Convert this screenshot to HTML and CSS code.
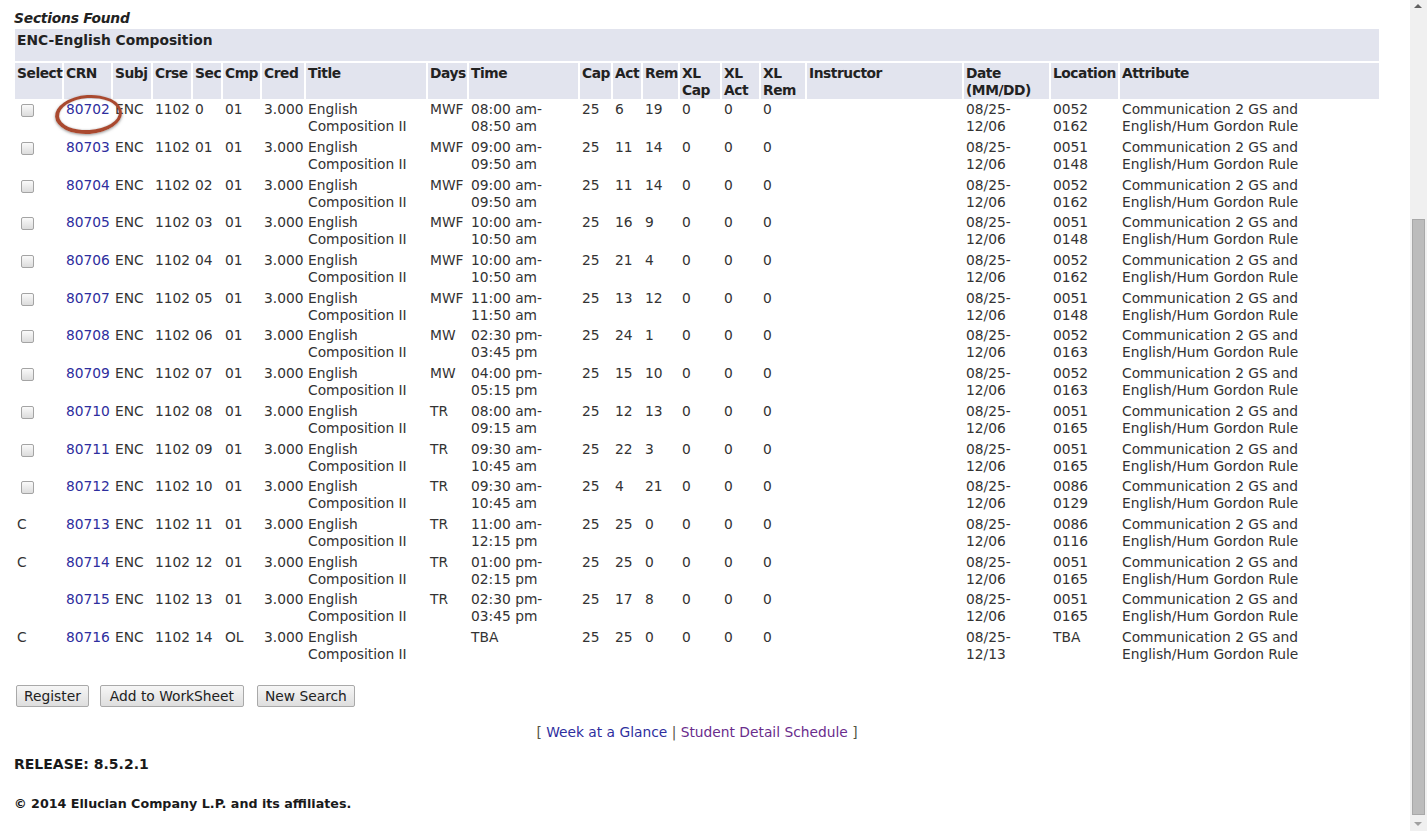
FILE: index.html
```html
<!DOCTYPE html>
<html lang="en">
<head>
  <meta charset="UTF-8">
  <title>Look-Up Classes to Add</title>
  <link rel="stylesheet" href="styles.css">
</head>
<body>
  <div class="pagebody">
    <form>
      <table class="datadisplaytable" summary="This layout table is used to present the sections found">
        <caption class="captiontext">Sections Found</caption>
        <colgroup>
          <col class="w-select"><col class="w-crn"><col class="w-subj"><col class="w-crse"><col class="w-sec">
          <col class="w-cmp"><col class="w-cred"><col class="w-title"><col class="w-days"><col class="w-time">
          <col class="w-cap"><col class="w-act"><col class="w-rem"><col class="w-xlcap"><col class="w-xlact">
          <col class="w-xlrem"><col class="w-instr"><col class="w-date"><col class="w-loc"><col class="w-attr">
        </colgroup>
        <tr>
          <th class="ddtitle" colspan="20">ENC-English Composition</th>
        </tr>
        <tr>
          <th class="ddheader">Select</th>
          <th class="ddheader">CRN</th>
          <th class="ddheader">Subj</th>
          <th class="ddheader">Crse</th>
          <th class="ddheader">Sec</th>
          <th class="ddheader">Cmp</th>
          <th class="ddheader">Cred</th>
          <th class="ddheader">Title</th>
          <th class="ddheader">Days</th>
          <th class="ddheader">Time</th>
          <th class="ddheader">Cap</th>
          <th class="ddheader">Act</th>
          <th class="ddheader">Rem</th>
          <th class="ddheader">XL Cap</th>
          <th class="ddheader">XL Act</th>
          <th class="ddheader">XL Rem</th>
          <th class="ddheader">Instructor</th>
          <th class="ddheader">Date (MM/DD)</th>
          <th class="ddheader">Location</th>
          <th class="ddheader">Attribute</th>
        </tr>
        <tr>
          <td class="dddefault"><input type="checkbox" name="sel_crn"></td>
          <td class="dddefault"><span class="marked"><a href="#">80702</a></span></td>
          <td class="dddefault">ENC</td><td class="dddefault">1102</td><td class="dddefault">0</td><td class="dddefault">01</td>
          <td class="dddefault">3.000</td><td class="dddefault">English Composition II</td>
          <td class="dddefault">MWF</td><td class="dddefault">08:00 am-08:50 am</td>
          <td class="dddefault">25</td><td class="dddefault">6</td><td class="dddefault">19</td>
          <td class="dddefault">0</td><td class="dddefault">0</td><td class="dddefault">0</td><td class="dddefault"></td>
          <td class="dddefault">08/25-12/06</td><td class="dddefault">0052 0162</td>
          <td class="dddefault">Communication 2 GS and English/Hum Gordon Rule</td>
        </tr>
        <tr>
          <td class="dddefault"><input type="checkbox" name="sel_crn"></td>
          <td class="dddefault"><a href="#">80703</a></td>
          <td class="dddefault">ENC</td><td class="dddefault">1102</td><td class="dddefault">01</td><td class="dddefault">01</td>
          <td class="dddefault">3.000</td><td class="dddefault">English Composition II</td>
          <td class="dddefault">MWF</td><td class="dddefault">09:00 am-09:50 am</td>
          <td class="dddefault">25</td><td class="dddefault">11</td><td class="dddefault">14</td>
          <td class="dddefault">0</td><td class="dddefault">0</td><td class="dddefault">0</td><td class="dddefault"></td>
          <td class="dddefault">08/25-12/06</td><td class="dddefault">0051 0148</td>
          <td class="dddefault">Communication 2 GS and English/Hum Gordon Rule</td>
        </tr>
        <tr>
          <td class="dddefault"><input type="checkbox" name="sel_crn"></td>
          <td class="dddefault"><a href="#">80704</a></td>
          <td class="dddefault">ENC</td><td class="dddefault">1102</td><td class="dddefault">02</td><td class="dddefault">01</td>
          <td class="dddefault">3.000</td><td class="dddefault">English Composition II</td>
          <td class="dddefault">MWF</td><td class="dddefault">09:00 am-09:50 am</td>
          <td class="dddefault">25</td><td class="dddefault">11</td><td class="dddefault">14</td>
          <td class="dddefault">0</td><td class="dddefault">0</td><td class="dddefault">0</td><td class="dddefault"></td>
          <td class="dddefault">08/25-12/06</td><td class="dddefault">0052 0162</td>
          <td class="dddefault">Communication 2 GS and English/Hum Gordon Rule</td>
        </tr>
        <tr>
          <td class="dddefault"><input type="checkbox" name="sel_crn"></td>
          <td class="dddefault"><a href="#">80705</a></td>
          <td class="dddefault">ENC</td><td class="dddefault">1102</td><td class="dddefault">03</td><td class="dddefault">01</td>
          <td class="dddefault">3.000</td><td class="dddefault">English Composition II</td>
          <td class="dddefault">MWF</td><td class="dddefault">10:00 am-10:50 am</td>
          <td class="dddefault">25</td><td class="dddefault">16</td><td class="dddefault">9</td>
          <td class="dddefault">0</td><td class="dddefault">0</td><td class="dddefault">0</td><td class="dddefault"></td>
          <td class="dddefault">08/25-12/06</td><td class="dddefault">0051 0148</td>
          <td class="dddefault">Communication 2 GS and English/Hum Gordon Rule</td>
        </tr>
        <tr>
          <td class="dddefault"><input type="checkbox" name="sel_crn"></td>
          <td class="dddefault"><a href="#">80706</a></td>
          <td class="dddefault">ENC</td><td class="dddefault">1102</td><td class="dddefault">04</td><td class="dddefault">01</td>
          <td class="dddefault">3.000</td><td class="dddefault">English Composition II</td>
          <td class="dddefault">MWF</td><td class="dddefault">10:00 am-10:50 am</td>
          <td class="dddefault">25</td><td class="dddefault">21</td><td class="dddefault">4</td>
          <td class="dddefault">0</td><td class="dddefault">0</td><td class="dddefault">0</td><td class="dddefault"></td>
          <td class="dddefault">08/25-12/06</td><td class="dddefault">0052 0162</td>
          <td class="dddefault">Communication 2 GS and English/Hum Gordon Rule</td>
        </tr>
        <tr>
          <td class="dddefault"><input type="checkbox" name="sel_crn"></td>
          <td class="dddefault"><a href="#">80707</a></td>
          <td class="dddefault">ENC</td><td class="dddefault">1102</td><td class="dddefault">05</td><td class="dddefault">01</td>
          <td class="dddefault">3.000</td><td class="dddefault">English Composition II</td>
          <td class="dddefault">MWF</td><td class="dddefault">11:00 am-11:50 am</td>
          <td class="dddefault">25</td><td class="dddefault">13</td><td class="dddefault">12</td>
          <td class="dddefault">0</td><td class="dddefault">0</td><td class="dddefault">0</td><td class="dddefault"></td>
          <td class="dddefault">08/25-12/06</td><td class="dddefault">0051 0148</td>
          <td class="dddefault">Communication 2 GS and English/Hum Gordon Rule</td>
        </tr>
        <tr>
          <td class="dddefault"><input type="checkbox" name="sel_crn"></td>
          <td class="dddefault"><a href="#">80708</a></td>
          <td class="dddefault">ENC</td><td class="dddefault">1102</td><td class="dddefault">06</td><td class="dddefault">01</td>
          <td class="dddefault">3.000</td><td class="dddefault">English Composition II</td>
          <td class="dddefault">MW</td><td class="dddefault">02:30 pm-03:45 pm</td>
          <td class="dddefault">25</td><td class="dddefault">24</td><td class="dddefault">1</td>
          <td class="dddefault">0</td><td class="dddefault">0</td><td class="dddefault">0</td><td class="dddefault"></td>
          <td class="dddefault">08/25-12/06</td><td class="dddefault">0052 0163</td>
          <td class="dddefault">Communication 2 GS and English/Hum Gordon Rule</td>
        </tr>
        <tr>
          <td class="dddefault"><input type="checkbox" name="sel_crn"></td>
          <td class="dddefault"><a href="#">80709</a></td>
          <td class="dddefault">ENC</td><td class="dddefault">1102</td><td class="dddefault">07</td><td class="dddefault">01</td>
          <td class="dddefault">3.000</td><td class="dddefault">English Composition II</td>
          <td class="dddefault">MW</td><td class="dddefault">04:00 pm-05:15 pm</td>
          <td class="dddefault">25</td><td class="dddefault">15</td><td class="dddefault">10</td>
          <td class="dddefault">0</td><td class="dddefault">0</td><td class="dddefault">0</td><td class="dddefault"></td>
          <td class="dddefault">08/25-12/06</td><td class="dddefault">0052 0163</td>
          <td class="dddefault">Communication 2 GS and English/Hum Gordon Rule</td>
        </tr>
        <tr>
          <td class="dddefault"><input type="checkbox" name="sel_crn"></td>
          <td class="dddefault"><a href="#">80710</a></td>
          <td class="dddefault">ENC</td><td class="dddefault">1102</td><td class="dddefault">08</td><td class="dddefault">01</td>
          <td class="dddefault">3.000</td><td class="dddefault">English Composition II</td>
          <td class="dddefault">TR</td><td class="dddefault">08:00 am-09:15 am</td>
          <td class="dddefault">25</td><td class="dddefault">12</td><td class="dddefault">13</td>
          <td class="dddefault">0</td><td class="dddefault">0</td><td class="dddefault">0</td><td class="dddefault"></td>
          <td class="dddefault">08/25-12/06</td><td class="dddefault">0051 0165</td>
          <td class="dddefault">Communication 2 GS and English/Hum Gordon Rule</td>
        </tr>
        <tr>
          <td class="dddefault"><input type="checkbox" name="sel_crn"></td>
          <td class="dddefault"><a href="#">80711</a></td>
          <td class="dddefault">ENC</td><td class="dddefault">1102</td><td class="dddefault">09</td><td class="dddefault">01</td>
          <td class="dddefault">3.000</td><td class="dddefault">English Composition II</td>
          <td class="dddefault">TR</td><td class="dddefault">09:30 am-10:45 am</td>
          <td class="dddefault">25</td><td class="dddefault">22</td><td class="dddefault">3</td>
          <td class="dddefault">0</td><td class="dddefault">0</td><td class="dddefault">0</td><td class="dddefault"></td>
          <td class="dddefault">08/25-12/06</td><td class="dddefault">0051 0165</td>
          <td class="dddefault">Communication 2 GS and English/Hum Gordon Rule</td>
        </tr>
        <tr>
          <td class="dddefault"><input type="checkbox" name="sel_crn"></td>
          <td class="dddefault"><a href="#">80712</a></td>
          <td class="dddefault">ENC</td><td class="dddefault">1102</td><td class="dddefault">10</td><td class="dddefault">01</td>
          <td class="dddefault">3.000</td><td class="dddefault">English Composition II</td>
          <td class="dddefault">TR</td><td class="dddefault">09:30 am-10:45 am</td>
          <td class="dddefault">25</td><td class="dddefault">4</td><td class="dddefault">21</td>
          <td class="dddefault">0</td><td class="dddefault">0</td><td class="dddefault">0</td><td class="dddefault"></td>
          <td class="dddefault">08/25-12/06</td><td class="dddefault">0086 0129</td>
          <td class="dddefault">Communication 2 GS and English/Hum Gordon Rule</td>
        </tr>
        <tr>
          <td class="dddefault">C</td>
          <td class="dddefault"><a href="#">80713</a></td>
          <td class="dddefault">ENC</td><td class="dddefault">1102</td><td class="dddefault">11</td><td class="dddefault">01</td>
          <td class="dddefault">3.000</td><td class="dddefault">English Composition II</td>
          <td class="dddefault">TR</td><td class="dddefault">11:00 am-12:15 pm</td>
          <td class="dddefault">25</td><td class="dddefault">25</td><td class="dddefault">0</td>
          <td class="dddefault">0</td><td class="dddefault">0</td><td class="dddefault">0</td><td class="dddefault"></td>
          <td class="dddefault">08/25-12/06</td><td class="dddefault">0086 0116</td>
          <td class="dddefault">Communication 2 GS and English/Hum Gordon Rule</td>
        </tr>
        <tr>
          <td class="dddefault">C</td>
          <td class="dddefault"><a href="#">80714</a></td>
          <td class="dddefault">ENC</td><td class="dddefault">1102</td><td class="dddefault">12</td><td class="dddefault">01</td>
          <td class="dddefault">3.000</td><td class="dddefault">English Composition II</td>
          <td class="dddefault">TR</td><td class="dddefault">01:00 pm-02:15 pm</td>
          <td class="dddefault">25</td><td class="dddefault">25</td><td class="dddefault">0</td>
          <td class="dddefault">0</td><td class="dddefault">0</td><td class="dddefault">0</td><td class="dddefault"></td>
          <td class="dddefault">08/25-12/06</td><td class="dddefault">0051 0165</td>
          <td class="dddefault">Communication 2 GS and English/Hum Gordon Rule</td>
        </tr>
        <tr>
          <td class="dddefault"></td>
          <td class="dddefault"><a href="#">80715</a></td>
          <td class="dddefault">ENC</td><td class="dddefault">1102</td><td class="dddefault">13</td><td class="dddefault">01</td>
          <td class="dddefault">3.000</td><td class="dddefault">English Composition II</td>
          <td class="dddefault">TR</td><td class="dddefault">02:30 pm-03:45 pm</td>
          <td class="dddefault">25</td><td class="dddefault">17</td><td class="dddefault">8</td>
          <td class="dddefault">0</td><td class="dddefault">0</td><td class="dddefault">0</td><td class="dddefault"></td>
          <td class="dddefault">08/25-12/06</td><td class="dddefault">0051 0165</td>
          <td class="dddefault">Communication 2 GS and English/Hum Gordon Rule</td>
        </tr>
        <tr>
          <td class="dddefault">C</td>
          <td class="dddefault"><a href="#">80716</a></td>
          <td class="dddefault">ENC</td><td class="dddefault">1102</td><td class="dddefault">14</td><td class="dddefault">OL</td>
          <td class="dddefault">3.000</td><td class="dddefault">English Composition II</td>
          <td class="dddefault"></td><td class="dddefault">TBA</td>
          <td class="dddefault">25</td><td class="dddefault">25</td><td class="dddefault">0</td>
          <td class="dddefault">0</td><td class="dddefault">0</td><td class="dddefault">0</td><td class="dddefault"></td>
          <td class="dddefault">08/25-12/13</td><td class="dddefault">TBA</td>
          <td class="dddefault">Communication 2 GS and English/Hum Gordon Rule</td>
        </tr>
      </table>

      <div class="actions">
        <input type="button" value="Register">
        <input type="button" class="wide" value="Add to WorkSheet">
        <input type="button" value="New Search">
      </div>
    </form>

    <div class="infotext">
      [ <a href="#">Week at a Glance</a> | <a href="#" class="visited">Student Detail Schedule</a> ]
    </div>
  </div>

  <div class="footer">
    <div class="release">RELEASE: 8.5.2.1</div>
    <div class="copyright">&copy; 2014 Ellucian Company L.P. and its affiliates.</div>
  </div>

  <!-- window scrollbar, page is scrolled down -->
  <div class="scrollbar">
    <span class="arrow up"></span>
    <span class="thumb"></span>
    <span class="arrow down"></span>
  </div>
</body>
</html>
```

FILE: styles.css
```css
html {
  overflow: hidden;
}
body {
  margin: 0;
  padding: 10px 0 0 13px;
  font-family: "DejaVu Sans", Verdana, sans-serif;
  font-size: 13.8px;
  line-height: 17px;
  color: #333;
  background: #fff;
}
a {
  color: #2e2e9e;
  text-decoration: none;
}
a.visited {
  color: #6a2c8c;
}

.pagebody {
  width: 1368px;
}

/* Sections table */
.datadisplaytable {
  width: 1368px;
  table-layout: fixed;
  border-spacing: 2px;
  border-collapse: separate;
}
.captiontext {
  text-align: left;
  font-weight: bold;
  font-style: italic;
  color: #222;
  padding-left: 1px;
  margin-bottom: -0.5px;
  letter-spacing: -0.2px;
}
.w-select { width: 47px; }
.w-crn { width: 47px; }
.w-subj { width: 38px; }
.w-crse { width: 38px; }
.w-sec { width: 28px; }
.w-cmp { width: 37px; }
.w-cred { width: 42px; }
.w-title { width: 120px; }
.w-days { width: 39px; }
.w-time { width: 109px; }
.w-cap { width: 31px; }
.w-act { width: 28px; }
.w-rem { width: 35px; }
.w-xlcap { width: 40px; }
.w-xlact { width: 37px; }
.w-xlrem { width: 44px; }
.w-instr { width: 155px; }
.w-date { width: 85px; }
.w-loc { width: 67px; }
.w-attr { width: 259px; }

.ddtitle {
  background: #e2e4ee;
  color: #222;
  text-align: left;
  vertical-align: top;
  height: 32px;
  box-sizing: border-box;
  padding: 3px 2px 0;
}
.ddheader {
  background: #e2e4ee;
  color: #222;
  text-align: left;
  vertical-align: top;
  padding: 2px 2px 0;
  height: 36px;
  box-sizing: border-box;
  letter-spacing: -0.45px;
}
.dddefault {
  vertical-align: top;
  text-align: left;
  padding: 0.85px 2px;
}

input[type="checkbox"] {
  appearance: none;
  width: 13px;
  height: 13px;
  margin: 3px 3px 3px 4px;
  border: 1px solid #a4a4a4;
  border-radius: 2px;
  background: linear-gradient(#fafafa, #dcdcdc);
  box-sizing: border-box;
  vertical-align: top;
}

/* red pen mark around the first CRN */
.marked {
  position: relative;
}
.marked::after {
  content: "";
  position: absolute;
  left: -11px;
  top: -6px;
  width: 60px;
  height: 32px;
  border: 3px solid #a9492f;
  border-bottom-width: 4px;
  border-left-width: 4px;
  border-radius: 50%;
  transform: rotate(-4deg);
  box-shadow: 0 1px 3px rgba(80, 80, 80, 0.6), inset 0 0 2px rgba(80, 80, 80, 0.45);
  pointer-events: none;
}

.actions {
  display: flex;
  gap: 11px;
  margin: 19px 0 0 3px;
}
.actions input {
  font-family: "DejaVu Sans", Verdana, sans-serif;
  font-size: 13.8px;
  color: #222;
  height: 22px;
  padding: 0 7px;
  border: 1px solid #a9a9a9;
  border-radius: 2px;
  background: linear-gradient(#f6f6f6, #dedede);
}
.actions input.wide {
  padding: 0 9px;
  margin-right: 2px;
}

.infotext {
  text-align: center;
  margin-top: 17px;
  color: #555545;
}

.footer {
  font-weight: bold;
  color: #1a1a1a;
  padding-left: 1px;
}
.release {
  margin-top: 15px;
  font-size: 14px;
}
.copyright {
  margin-top: 22px;
  font-size: 12.7px;
}

/* fake window scrollbar */
.scrollbar {
  position: fixed;
  top: 0;
  right: 0;
  width: 17px;
  height: 100%;
  background: #f0f0f0;
}
.thumb {
  position: absolute;
  left: 2px;
  top: 219px;
  width: 11px;
  height: 594px;
  background: #bcbcbc;
  border: 1px solid #a8a8a8;
}
.arrow {
  position: absolute;
  left: 4px;
  width: 0;
  height: 0;
  border-left: 4px solid transparent;
  border-right: 4px solid transparent;
}
.arrow.up {
  top: 4px;
  border-bottom: 4px solid #606060;
}
.arrow.down {
  bottom: 5px;
  border-top: 4px solid #a0a0a0;
}
```
